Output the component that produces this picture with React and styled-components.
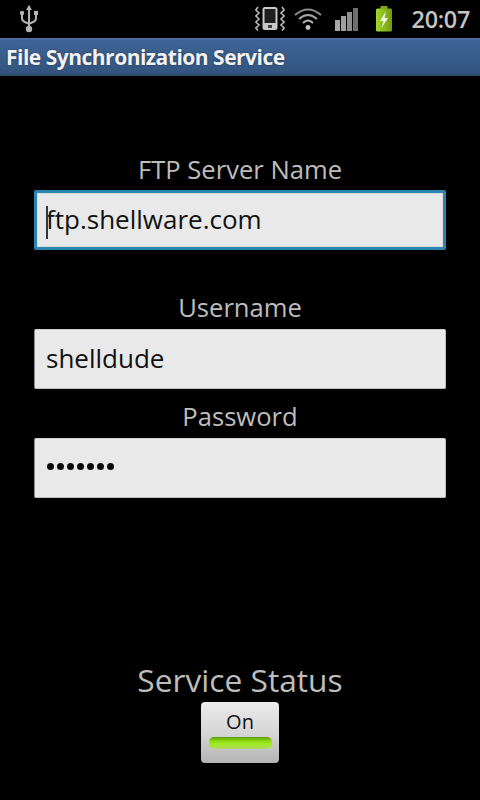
import React from "react";
import styled, { createGlobalStyle } from "styled-components";

const Global = createGlobalStyle`
  html, body { margin: 0; padding: 0; background: #000; }
  body { font-family: "Open Sans", "Noto Sans", sans-serif; }
  * { box-sizing: border-box; }
`;
const Screen = styled.div`
  width: 480px; height: 800px; background: #000; display: flex; flex-direction: column; overflow: hidden;
`;
const StatusBar = styled.div`
  height: 38px; display: flex; align-items: center; padding: 0 10px 0 18px; color: #bdbdbd;
`;
const StatusRight = styled.div`
  margin-left: auto; display: flex; align-items: center;
`;
const Clock = styled.span`
  font-size: 23.4px; font-weight: 600; color: #c4c4c4; margin-left: 19px; line-height: 38px; letter-spacing: -0.3px;
`;
const IconSlot = styled.svg`
  display: block; margin-left: ${p => p.$gap || 0}px; flex: none;
`;
const TitleBar = styled.div`
  height: 38px; background: linear-gradient(#4f76a6 0, #3f6596 6%, #32547f 92%, #2a4468 100%);
  padding-left: 6px; padding-bottom: 1px; display: flex; align-items: center;
  font-size: 21px; font-weight: 700; color: #f2f2f2; letter-spacing: -0.5px; white-space: nowrap;
  text-shadow: 0 0 2px rgba(0,0,0,.5);
`;
const Content = styled.div`
  display: flex; flex-direction: column; padding: 76px 34px 0;
`;
const Label = styled.div`
  text-align: center; font-size: 25.6px; line-height: 36px; color: #bdbdbd;
`;
const Field = styled.div`
  position: relative; height: 60px; display: flex; align-items: center; padding: 0 0 2px 11px;
  background: #e9e9e9; color: #111; font-size: 26px; white-space: nowrap;
  border-radius: 2px;
  border: ${p => p.$focus ? "3px solid #2a86b0" : "1px solid #bdbdbd"};
  ${p => p.$focus ? "padding-left: 9px; box-shadow: inset 0 0 0 1px #dcdcdc;" : "border-left-color:#8f8f8f; border-top-color:#d0d0d0;"}
  margin-top: ${p => p.$mt || 0}px;
  margin-bottom: ${p => p.$mb || 0}px;
`;
const Caret = styled.span`
  position: absolute; left: 9px; top: 13px; width: 2px; height: 33px; background: #2b3a44;
`;
const Dots = styled.span`
  display: flex; gap: 3px; margin-left: 1px; margin-bottom: 1px;
`;
const Dot = styled.i`
  display: block; width: 7px; height: 7px; border-radius: 50%; background: #0a0a0a;
`;
const StatusBlock = styled.div`
  margin-top: 160px; display: flex; flex-direction: column; align-items: center;
`;
const StatusLabel = styled.div`
  font-size: 31.7px; line-height: 44px; color: #bdbdbd;
`;
const Toggle = styled.div`
  width: 78px; height: 61px; border-radius: 4px;
  background: linear-gradient(#ebebeb 0, #d6d6d6 50%, #b4b4b4 100%);
  display: flex; flex-direction: column; align-items: center; padding-top: 5px;
`;
const ToggleText = styled.div`
  font-size: 20px; line-height: 30px; color: #151515;
`;
const ToggleLight = styled.div`
  width: 63px; height: 12px; border-radius: 5px;
  background: linear-gradient(#5c9c06 0, #8fe014 35%, #a4ea2c 65%, #b2d66a 100%);
`;

const Usb = () => (
  <svg width="22" height="32" viewBox="0 0 22 32" fill="none">
    <path d="M11 3 L11 24" stroke="#b4b4b4" strokeWidth="2" />
    <path d="M11 2 L14 7 L8 7 Z" fill="#b4b4b4" />
    <path d="M4 11 V15 Q4 18 7 19 L11 21 L15 19 Q18 18 18 15 V11" stroke="#b4b4b4" strokeWidth="2" />
    <circle cx="4" cy="10" r="2.2" fill="#b4b4b4" />
    <rect x="16" y="8" width="4" height="4" fill="#b4b4b4" />
    <circle cx="11" cy="26" r="3.2" fill="#b4b4b4" />
  </svg>
);
const Vibrate = () => (
  <IconSlot width="30" height="26" viewBox="0 0 30 26" fill="none">
    <rect x="7.5" y="1" width="15" height="23" rx="2.5" fill="#c8c8c8" />
    <rect x="9.5" y="3" width="11" height="14" fill="#1e1e1e" />
    <rect x="13" y="19" width="4" height="3" fill="#3a3a3a" />
    <path d="M3 1 L0.8 4 L4 7 L0.8 10 L4 13 L0.8 16 L4 19 L0.8 22 L3 24.5 M27 1 L29.2 4 L26 7 L29.2 10 L26 13 L29.2 16 L26 19 L29.2 22 L27 24.5" stroke="#bdbdbd" strokeWidth="1.6" />
  </IconSlot>
);
const Wifi = () => (
  <IconSlot $gap={9} width="28" height="24" viewBox="0 0 28 24" fill="none">
    <path d="M1 8 Q14 -3 27 8" stroke="#8a8a8a" strokeWidth="2" />
    <path d="M5 12 Q14 4 23 12" stroke="#a4a4a4" strokeWidth="2" />
    <path d="M9 16 Q14 11 19 16" stroke="#b4b4b4" strokeWidth="2" />
    <circle cx="14" cy="20.5" r="2.4" fill="#c4c4c4" />
  </IconSlot>
);
const Signal = () => (
  <IconSlot $gap={13} width="24" height="24" viewBox="0 0 24 24">
    <rect x="0" y="13" width="5" height="11" fill="#a8a8a8" />
    <rect x="6" y="9" width="5" height="15" fill="#a0a0a0" />
    <rect x="12" y="5" width="5" height="19" fill="#8f8f8f" />
    <rect x="18" y="1" width="5" height="23" fill="#6f6f6f" />
  </IconSlot>
);
const Battery = () => (
  <IconSlot $gap={16} width="18" height="26" viewBox="0 0 18 26">
    <defs>
      <linearGradient id="batt" x1="0" y1="0" x2="1" y2="0">
        <stop offset="0" stopColor="#a4d82a" />
        <stop offset="1" stopColor="#6f9c12" />
      </linearGradient>
    </defs>
    <rect x="5.5" y="0" width="7" height="3" fill="#7ba516" />
    <rect x="1" y="2.5" width="16" height="23" rx="1.5" fill="url(#batt)" />
    <path d="M11 5 L5 15 L8.5 15 L6.5 22 L13 12 L9.5 12 Z" fill="#f4f8e8" />
  </IconSlot>
);

export default function App() {
  return (
    <Screen>
      <Global />
      <StatusBar>
        <Usb />
        <StatusRight>
          <Vibrate />
          <Wifi />
          <Signal />
          <Battery />
          <Clock>20:07</Clock>
        </StatusRight>
      </StatusBar>
      <TitleBar>File Synchronization Service</TitleBar>
      <Content>
        <Label>FTP Server Name</Label>
        <Field $focus $mt={2} $mb={40}>
          <Caret />
          ftp.shellware.com
        </Field>
        <Label>Username</Label>
        <Field $mt={3} $mb={10}>shelldude</Field>
        <Label>Password</Label>
        <Field $mt={3}>
          <Dots>{Array.from({ length: 7 }, (_, i) => <Dot key={i} />)}</Dots>
        </Field>
      </Content>
      <StatusBlock>
        <StatusLabel>Service Status</StatusLabel>
        <Toggle>
          <ToggleText>On</ToggleText>
          <ToggleLight />
        </Toggle>
      </StatusBlock>
    </Screen>
  );
}
